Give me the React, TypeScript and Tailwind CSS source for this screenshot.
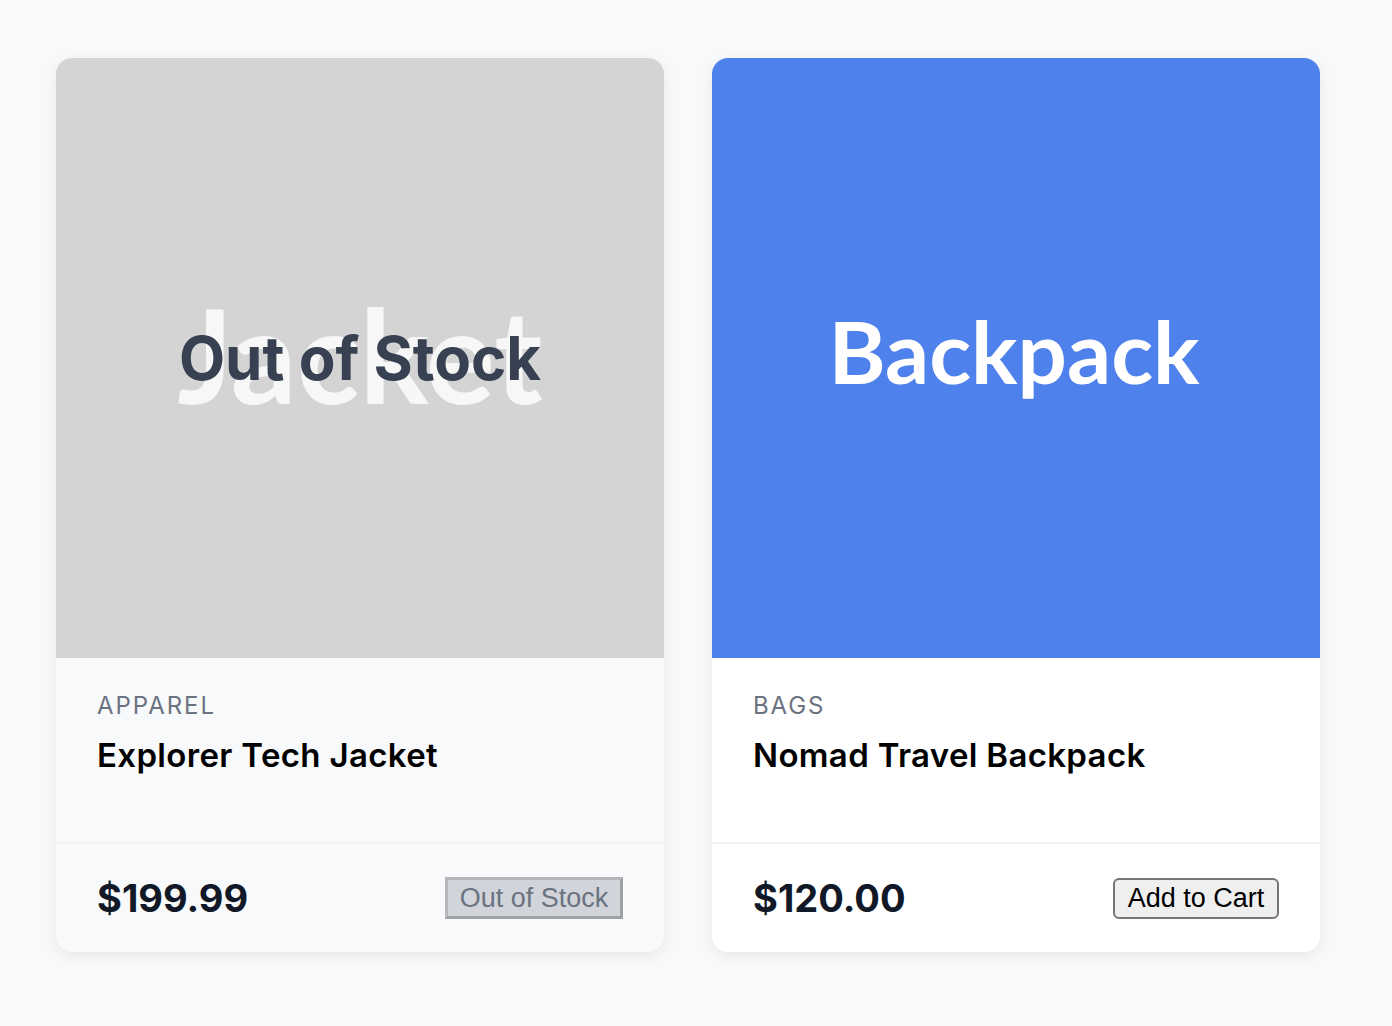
import React from 'react';

interface Product {
  category: string;
  name: string;
  price: string;
  label: string;
  inStock: boolean;
}

const products: Product[] = [
  { category: 'Apparel', name: 'Explorer Tech Jacket', price: '$199.99', label: 'Jacket', inStock: false },
  { category: 'Bags', name: 'Nomad Travel Backpack', price: '$120.00', label: 'Backpack', inStock: true },
];

const ProductCard: React.FC<{ product: Product }> = ({ product }) => {
  const soldOut = !product.inStock;
  return (
    <div
      className={`flex w-[608px] flex-col overflow-hidden rounded-[16px] shadow-[0_4px_14px_rgba(0,0,0,0.07)] ${
        soldOut ? 'bg-[#f8f9fb]' : 'bg-white'
      }`}
    >
      {soldOut ? (
        <div className="relative flex h-[600px] items-center justify-center bg-[#d4d4d4]">
          <span className="-mt-[8px] font-['Lato',sans-serif] text-[130px] leading-none font-bold text-[#f7f7f7]">
            {product.label}
          </span>
          <div className="absolute inset-0 flex items-center justify-center">
            <span className="text-[60px] leading-none font-bold text-[#374151]">Out of Stock</span>
          </div>
        </div>
      ) : (
        <div className="flex h-[600px] items-center justify-center bg-[#4f81ec]">
          <span className="-mt-[16px] ml-[-4px] font-['Lato',sans-serif] text-[87px] leading-none font-bold text-white">
            {product.label}
          </span>
        </div>
      )}

      <div className="h-[184px] px-[41px] pt-[32px]">
        <p className="text-[24px] leading-[32px] tracking-[0.08em] text-[#6b7280] uppercase">{product.category}</p>
        <h3 className="mt-[13px] text-[33px] leading-[40px] font-semibold tracking-[0.01em] text-black">
          {product.name}
        </h3>
      </div>

      <div className="flex h-[110px] items-center justify-between border-t-2 border-[#f1f2f4] px-[41px]">
        <span className="text-[38px] font-bold text-[#111827]">{product.price}</span>
        {soldOut ? (
          <button
            disabled
            className="flex h-[42px] w-[178px] items-center justify-center border-[3px] border-t-[#b5b6b9] border-r-[#9fa0a4] border-b-[#9fa0a4] border-l-[#b5b6b9] bg-[#d1d5db] font-['Liberation_Sans',Arial,sans-serif] text-[27px] text-[#6b7280]"
          >
            Out of Stock
          </button>
        ) : (
          <button className="flex h-[41px] w-[166px] items-center justify-center rounded-[6px] border-2 border-[#767676] bg-[#efefef] font-['Liberation_Sans',Arial,sans-serif] text-[27px] text-black">
            Add to Cart
          </button>
        )}
      </div>
    </div>
  );
};

export default function App() {
  return (
    <div className="min-h-screen bg-[#f8f9fb] pt-[58px] pl-[56px] font-['Inter',sans-serif]">
      <div className="flex gap-[48px]">
        {products.map((p) => (
          <ProductCard key={p.name} product={p} />
        ))}
      </div>
    </div>
  );
}
